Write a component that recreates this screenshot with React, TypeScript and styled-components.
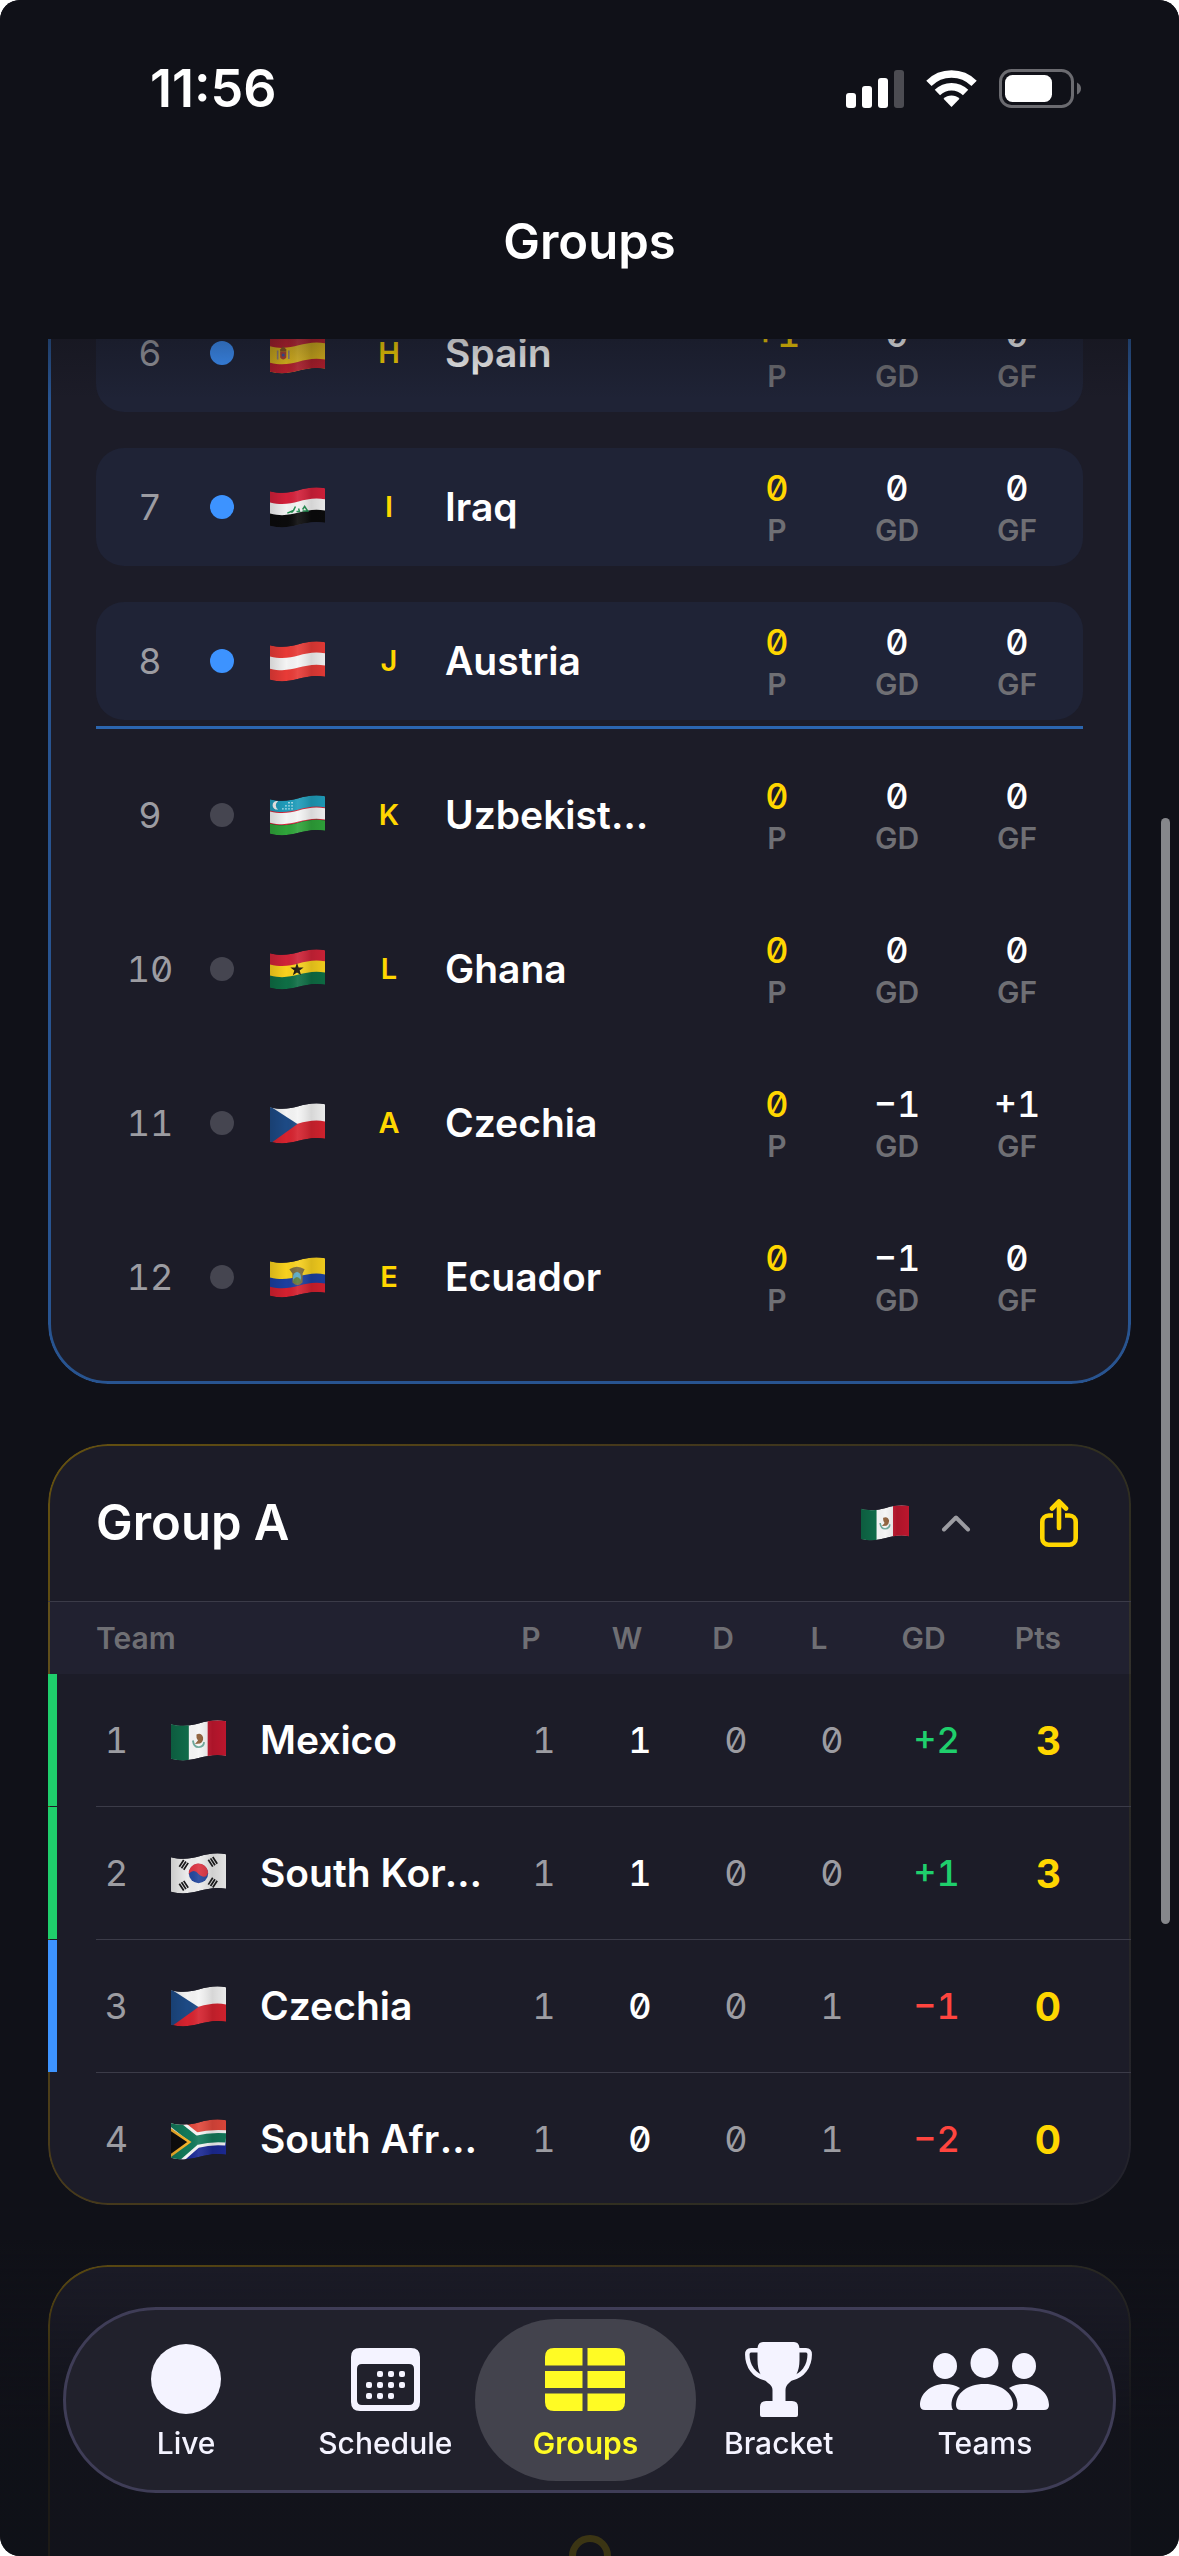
import { useId, useState } from "react";
import type { ReactNode } from "react";
import styled, { createGlobalStyle, ThemeProvider } from "styled-components";

const theme = {
  page: "#101118",
  card: "#1c1c28",
  cardRaised: "rgba(180, 180, 255, 0.04)",
  rowActive: "#1f2336",
  line: "#3b3b48",
  blue: "#3d93ff",
  blueLine: "#2b65ae",
  blueBorder: "#285490",
  green: "#1fcf6c",
  red: "#ff453f",
  gold: "#ffd600",
  textPrimary: "#ffffff",
  textSecondary: "#9c9ca2",
  textMuted: "#6f6f74",
  tabText: "#f4f3ff",
  tabActive: "#fffb24",
};

const GlobalStyle = createGlobalStyle`
  * {
    box-sizing: border-box;
  }

  body {
    margin: 0;
    background: #ffffff;
    font-family: Inter, "Liberation Sans", sans-serif;
  }
`;

const Screen = styled.div`
  height: 100vh;
  display: flex;
  flex-direction: column;
  overflow: hidden;
  border-radius: 20px;
  background: ${(props) => props.theme.page};
  color: ${(props) => props.theme.textPrimary};
`;

const Header = styled.header`
  position: relative;
  z-index: 10;
  flex: none;
  padding-bottom: 32px;
  background: ${(props) => props.theme.page};

  &::after {
    content: "";
    position: absolute;
    left: 0;
    right: 0;
    top: 100%;
    height: 60px;
    background: linear-gradient(rgba(16, 17, 24, 0.35), rgba(16, 17, 24, 0));
  }
`;

const StatusBar = styled.div`
  display: flex;
  align-items: center;
  justify-content: space-between;
  height: 177px;
  padding: 0 98px 0 150px;
`;

const Clock = styled.time`
  font-size: 52px;
  font-weight: 600;
  line-height: 60px;
`;

const StatusIcons = styled.div`
  display: flex;
  align-items: center;
  gap: 22px;

  svg {
    display: block;
  }
`;

const PageTitle = styled.h1`
  margin: 0;
  font-size: 49px;
  font-weight: 600;
  line-height: 130px;
  text-align: center;
`;

const Content = styled.main`
  flex: 1;
  min-height: 0;
  display: flex;
  flex-direction: column;
  gap: 60px;
  padding: 0 48px;
  margin-top: -93px;
`;

const Card = styled.section<{ $tone: "blue" | "gold" }>`
  position: relative;
  isolation: isolate;
  flex: none;
  overflow: hidden;
  border-radius: 60px;
  background: ${(props) => props.theme.card};

  &::before {
    content: "";
    position: absolute;
    inset: 0;
    z-index: -1;
    border-radius: inherit;
    padding: ${({ $tone }) => ($tone === "blue" ? 3 : 2)}px;
    background: ${({ $tone, theme }) =>
      $tone === "blue"
        ? theme.blueBorder
        : "linear-gradient(125deg, #65510f, #46391b 35%, #32301f 65%, #22222c)"};
    mask: linear-gradient(#000 0 0) content-box exclude, linear-gradient(#000 0 0);
  }
`;

const RankList = styled.ol`
  display: flex;
  flex-direction: column;
  margin: 0;
  padding: 48px;
  list-style: none;
`;

const RankRow = styled.li<{ $qualified: boolean; $afterCut: boolean }>`
  display: flex;
  align-items: center;
  gap: 36px;
  min-height: 118px;
  padding: 18px 18px 18px 30px;
  border-radius: 28px;
  background: ${({ $qualified, theme }) => ($qualified ? theme.rowActive : "transparent")};

  & + & {
    margin-top: ${({ $afterCut }) => ($afterCut ? 27 : 36)}px;
  }
`;

const CutLine = styled.li`
  height: 3px;
  margin: 6px 0 27px;
  background: ${(props) => props.theme.blueLine};
`;

const Rank = styled.span`
  flex: none;
  width: 48px;
  font-feature-settings: "tnum", "zero";
  font-size: 36px;
  line-height: 44px;
  text-align: center;
  color: ${(props) => props.theme.textSecondary};
`;

const Dot = styled.span<{ $qualified: boolean }>`
  flex: none;
  width: 24px;
  height: 24px;
  border-radius: 50%;
  background: ${({ $qualified, theme }) => ($qualified ? theme.blue : "#454550")};
`;

const GroupLetter = styled.span`
  flex: none;
  width: 48px;
  padding-left: 8px;
  font-size: 29px;
  font-weight: 600;
  line-height: 36px;
  text-align: center;
  color: ${(props) => props.theme.gold};
`;

const TeamName = styled.span`
  display: block;
  flex: 1;
  min-width: 0;
  overflow: hidden;
  text-overflow: ellipsis;
  white-space: nowrap;
  font-size: 39px;
  font-weight: 600;
  line-height: 48px;
`;

const Stats = styled.dl`
  flex: none;
  display: grid;
  grid-template-columns: repeat(3, 96px);
  column-gap: 24px;
  margin: 0 0 0 42px;
`;

const Stat = styled.div`
  display: flex;
  flex-direction: column-reverse;
  align-items: center;
  gap: 2px;
`;

const StatLabel = styled.dt`
  font-size: 30px;
  font-weight: 600;
  line-height: 36px;
  color: ${(props) => props.theme.textMuted};
`;

const StatValue = styled.dd<{ $gold?: boolean }>`
  margin: 0;
  font-feature-settings: "tnum", "zero";
  font-size: 36px;
  font-weight: 500;
  line-height: 44px;
  color: ${({ $gold, theme }) => ($gold ? theme.gold : theme.textPrimary)};
`;

const GroupHeader = styled.div`
  display: flex;
  align-items: center;
  height: 158px;
  padding: 0 48px;
  border-bottom: 1px solid ${(props) => props.theme.line};
`;

const GroupTitle = styled.h2`
  flex: 1;
  margin: 0;
  font-size: 49px;
  font-weight: 600;
  line-height: 60px;
`;

const IconButton = styled.button`
  display: flex;
  align-items: center;
  gap: 32px;
  padding: 0;
  border: 0;
  background: none;
  color: ${(props) => props.theme.textSecondary};
  cursor: pointer;

  & + & {
    margin-left: 64px;
    padding: 0 5px;
    color: ${(props) => props.theme.gold};
  }
`;

const Table = styled.table`
  width: 100%;
  table-layout: fixed;
  border-collapse: separate;
  border-spacing: 0;

  td,
  th {
    padding: 0;
  }
`;

const Col = styled.col<{ $width?: number }>`
  width: ${({ $width }) => ($width ? `${$width}px` : "auto")};
`;

const HeadCell = styled.th<{ $align?: "left" | "right" }>`
  height: 72px;
  background: ${(props) => props.theme.cardRaised};
  font-size: 30px;
  font-weight: 600;
  text-align: ${({ $align = "center" }) => $align};
  color: ${(props) => props.theme.textMuted};

  &&& {
    padding: ${({ $align }) =>
      $align === "left" ? "0 0 0 48px" : $align === "right" ? "0 70px 0 0" : "0 26px 0 0"};
  }
`;

const TeamRow = styled.tr`
  td {
    height: 133px;
    border-bottom: 1px solid ${(props) => props.theme.line};
  }

  td:first-child {
    border-bottom-color: transparent;
  }

  &:last-child td {
    height: 132px;
    border-bottom: 0;
  }
`;

const ZoneCell = styled.td<{ $zone?: "green" | "blue" }>`
  ${({ $zone, theme }) => $zone && `box-shadow: inset 9px 0 0 ${theme[$zone]};`}
`;

const NameCell = styled.td`
  &&& {
    padding-right: 12px;
  }
`;

const NumberCell = styled.td<{ $tone?: "primary" | "green" | "red" }>`
  font-feature-settings: "tnum", "zero";
  font-size: 36px;
  font-weight: ${({ $tone }) => ($tone ? 500 : 400)};
  text-align: center;
  color: ${({ $tone, theme }) =>
    $tone === "primary" ? theme.textPrimary : $tone ? theme[$tone] : theme.textSecondary};
`;

const FlagCell = styled.td`
  text-align: center;

  svg {
    vertical-align: middle;
  }
`;

const PointsCell = styled.td`
  font-size: 39px;
  font-weight: 700;
  text-align: right;
  color: ${(props) => props.theme.gold};

  &&& {
    padding-right: 70px;
  }
`;

const LoadingBody = styled.div`
  display: flex;
  justify-content: center;
  height: 420px;
  padding-top: 270px;
`;

const Spinner = styled.span`
  width: 42px;
  height: 42px;
  border: 7px solid ${(props) => props.theme.gold};
  border-radius: 50%;
`;

const ScrollThumb = styled.div`
  position: fixed;
  z-index: 12;
  top: 32%;
  right: 9px;
  width: 9px;
  height: 1106px;
  border-radius: 5px;
  background: #86878b;
`;

const BottomFade = styled.div`
  position: fixed;
  z-index: 14;
  left: 0;
  right: 0;
  bottom: 0;
  height: 316px;
  border-radius: 0 0 20px 20px;
  background: linear-gradient(rgba(16, 17, 24, 0), rgba(16, 17, 24, 0.82) 60%);
`;

const TabBar = styled.nav`
  position: fixed;
  z-index: 20;
  left: 63px;
  right: 63px;
  bottom: 63px;
  display: grid;
  grid-template-columns: 198fr 200fr 200fr 186fr 226fr;
  height: 186px;
  padding: 9px 15px 9px 21px;
  border: 3px solid #3f3d57;
  border-radius: 93px;
  background: #21212c;
`;

const Tab = styled.a<{ $active: boolean }>`
  display: flex;
  flex-direction: column;
  align-items: center;
  gap: 8px;
  margin: 0 -10px;
  padding-top: 22px;
  border-radius: 81px;
  background: ${({ $active }) => ($active ? "#43434d" : "transparent")};
  color: ${({ $active, theme }) => ($active ? theme.tabActive : theme.tabText)};
  font-size: 30px;
  font-weight: ${({ $active }) => ($active ? 600 : 500)};
  line-height: 36px;
  text-decoration: none;
`;

const TabIcon = styled.span`
  display: flex;
  align-items: center;
  height: 76px;
`;

type Country =
  | "spain"
  | "iraq"
  | "austria"
  | "uzbekistan"
  | "ghana"
  | "czechia"
  | "ecuador"
  | "mexico"
  | "southKorea"
  | "southAfrica";

// A horizontal stripe of the waving cloth, between heights a and b (0 to 34)
const stripe = (a: number, b: number) =>
  `M0 ${a + 4}C12 ${a + 7} 20 ${a + 5} 28 ${a + 3}C36 ${a + 1} 44 ${a - 1} 54 ${a + 1}` +
  `L54 ${b + 1}C44 ${b - 1} 36 ${b + 1} 28 ${b + 3}C20 ${b + 5} 12 ${b + 7} 0 ${b + 4}Z`;

const trigram = (x: number, y: number, angle: number) => (
  <g transform={`translate(${x} ${y}) rotate(${angle})`} stroke="#1b1b1d" strokeWidth="1.7">
    <path d="M-4 -2.6H4M-4 0H4M-4 2.6H4" />
  </g>
);

const flagArt: Record<Country, ReactNode> = {
  spain: (
    <>
      <path d={stripe(0, 34)} fill="#f3c81c" />
      <path d={stripe(0, 9)} fill="#c8202f" />
      <path d={stripe(25, 34)} fill="#c8202f" />
      <path d="M10 18h6v6q-3 4-6 0z" fill="#b5453a" />
      <path d="M10 16l3-3 3 3v2h-6z" fill="#8d5a22" />
      <path d="M7.500 17v9M18.500 17v8.500" stroke="#9a8a86" strokeWidth="1.600" />
      <circle cx="13" cy="21.500" r="1.500" fill="#3a5aa8" />
    </>
  ),
  iraq: (
    <>
      <path d={stripe(0, 12)} fill="#d3203a" />
      <path d={stripe(11, 23)} fill="#f1f1f1" />
      <path d={stripe(22, 34)} fill="#0b0b0c" />
      <path
        d="M17 25.500l6-2.500 2-4m-2 4l-2 2m5-1h3l-1-3m4 2.500h5l-3-4.500-2 3"
        fill="none"
        stroke="#1d8a4c"
        strokeWidth="1.500"
      />
    </>
  ),
  austria: (
    <>
      <path d={stripe(0, 34)} fill="#e83b37" />
      <path d={stripe(11, 23)} fill="#f4f4f4" />
    </>
  ),
  uzbekistan: (
    <>
      <path d={stripe(0, 12)} fill="#1f9cba" />
      <path d={stripe(11, 24)} fill="#d0283a" />
      <path d={stripe(12, 23)} fill="#f5f5f5" />
      <path d={stripe(24, 34)} fill="#2fa43a" />
      <path d="M8 6a4.200 4.200 0 1 0 0 8a4.600 4.600 0 0 1 0-8z" fill="#f5f5f5" />
      <path
        d="M12 13.500h12M15 10.500h9M18 7.500h6"
        stroke="#dff2f6"
        strokeWidth="1.300"
        strokeDasharray="1.300 1.700"
      />
    </>
  ),
  ghana: (
    <>
      <path d={stripe(0, 12)} fill="#cf2338" />
      <path d={stripe(11, 23)} fill="#f9d21d" />
      <path d={stripe(22, 34)} fill="#0e6e45" />
      <path
        d="M26.500 13.500l1.600 4.600h4.900l-3.900 2.900 1.500 4.700-4.100-2.800-4.100 2.800 1.500-4.700-3.900-2.900h4.900z"
        fill="#16130a"
      />
    </>
  ),
  czechia: (
    <>
      <path d={stripe(0, 18)} fill="#f4f4f4" />
      <path d={stripe(17, 34)} fill="#d6232f" />
      <path d="M0 3L27 20.500L0 40Z" fill="#1d4a85" />
    </>
  ),
  ecuador: (
    <>
      <path d={stripe(0, 17)} fill="#f8d11e" />
      <path d={stripe(16, 26)} fill="#1b3fa0" />
      <path d={stripe(25, 34)} fill="#d3202f" />
      <path d="M19 12q7.500-5 15 0l-2 4v9q-5 5-10 0v-9z" fill="#7a6a3c" />
      <ellipse cx="26.500" cy="20" rx="4" ry="5.500" fill="#58a8c4" />
      <path d="M23 22q3.500-5 7 0v3q-3.500 2-7 0z" fill="#5c7d3a" />
    </>
  ),
  mexico: (
    <>
      <path d={stripe(0, 34)} fill="#f5f5f5" />
      <path d="M0 0H17.500V42H0Z" fill="#0f6b49" />
      <path d="M36 0H54V42H36Z" fill="#c3172f" />
      <path d="M21.500 20q1 7 6 6.500q4.500-.5 5-5" fill="none" stroke="#6aa79a" strokeWidth="1.800" />
      <path d="M25 14q5-2 6.500 3q.5 4-3 6l-5 .5l3-3.500q-2-2-1.500-6z" fill="#8a5a33" />
    </>
  ),
  southKorea: (
    <>
      <path d={stripe(0, 34)} fill="#ececec" />
      <circle cx="27" cy="20" r="9.500" fill="#22469c" />
      <path
        d="M17.500 21A9.500 9.500 0 0 1 36.500 18.500Q35.500 24 31 23Q28.500 22 27 20.500Q24 16.500 20.500 18Q18 19 17.500 21Z"
        fill="#db3341"
      />
      {trigram(12.5, 11.5, -57)}
      {trigram(41, 8.5, 57)}
      {trigram(12.5, 32, 57)}
      {trigram(41, 29, -57)}
    </>
  ),
  southAfrica: (
    <>
      <path d={stripe(0, 17)} fill="#e2483c" />
      <path d={stripe(17, 34)} fill="#1c2a96" />
      <path
        d="M0 2L24 21Q40 17 54 18.500M0 42L24 21"
        fill="none"
        stroke="#f4f4f4"
        strokeWidth="15"
      />
      <path d="M0 2L24 21Q40 17 54 18.500M0 42L24 21" fill="none" stroke="#12795a" strokeWidth="9" />
      <path d="M-2 9L18 22.500L-2 37Z" fill="#0d0d0e" stroke="#f5b32b" strokeWidth="2.500" />
    </>
  ),
};

const FlagImage = styled.svg`
  flex: none;
`;

function Flag({ country, label, width = 55 }: { country: Country; label: string; width?: number }) {
  const id = useId();

  return (
    <FlagImage
      width={width}
      height={Math.round((width * 40) / 54)}
      viewBox="0 0 54 40"
      role="img"
      aria-label={label}
    >
      <clipPath id={`${id}-cloth`}>
        <path d={stripe(0, 34)} />
      </clipPath>
      <linearGradient id={`${id}-shade`}>
        <stop offset="0" stopColor="#000" stopOpacity="0.14" />
        <stop offset="0.3" stopColor="#000" stopOpacity="0" />
        <stop offset="0.5" stopColor="#fff" stopOpacity="0.08" />
        <stop offset="0.75" stopColor="#000" stopOpacity="0.12" />
        <stop offset="1" stopColor="#000" stopOpacity="0.04" />
      </linearGradient>
      <g clipPath={`url(#${id}-cloth)`}>
        {flagArt[country]}
        <rect width="54" height="42" fill={`url(#${id}-shade)`} />
      </g>
    </FlagImage>
  );
}

const SignalIcon = () => (
  <svg width="58" height="38" viewBox="0 0 58 38" fill="#fff" aria-hidden="true">
    <rect x="0" y="23" width="10" height="15" rx="3" />
    <rect x="16" y="16" width="10" height="22" rx="3" />
    <rect x="32" y="8" width="10" height="30" rx="3" />
    <rect x="48" y="0" width="10" height="38" rx="3" opacity="0.25" />
  </svg>
);

const WifiIcon = () => (
  <svg width="51" height="37" viewBox="0 0 51 37" fill="none" aria-hidden="true">
    <path d="M2.900 13.400A32 32 0 0 1 48.100 13.400" stroke="#fff" strokeWidth="7.500" />
    <path d="M11.400 22.500A20 20 0 0 1 39.600 22.500" stroke="#fff" strokeWidth="7.500" />
    <path d="M25.500 37L17.500 28.800A11.500 11.500 0 0 1 33.500 28.800Z" fill="#fff" />
  </svg>
);

const BatteryIcon = () => (
  <svg width="82" height="39" viewBox="0 0 82 39" fill="none" aria-hidden="true">
    <rect x="1.500" y="1.500" width="72" height="36" rx="11" stroke="#6b6b70" strokeWidth="3" />
    <rect x="6" y="6" width="47" height="27" rx="7.500" fill="#fff" />
    <path d="M78 13.500q4 2 4 6t-4 6z" fill="#6b6b70" />
  </svg>
);

const ChevronIcon = () => (
  <svg width="30" height="18" viewBox="0 0 30 18" fill="none" aria-hidden="true">
    <path
      d="M3 15.500L15 3.500L27 15.500"
      stroke="currentColor"
      strokeWidth="4"
      strokeLinecap="round"
      strokeLinejoin="round"
    />
  </svg>
);

const ShareIcon = () => (
  <svg width="38" height="48" viewBox="0 0 38 48" fill="none" aria-hidden="true">
    <g stroke="currentColor" strokeWidth="4.600" strokeLinecap="round" strokeLinejoin="round">
      <path
        d="M13 16.500H8.700a6.400 6.400 0 0 0-6.400 6.400V39.300a6.400 6.400 0 0 0 6.400 6.400h20.600a6.400 6.400 0 0 0 6.400-6.400V22.900a6.400 6.400 0 0 0-6.400-6.400H25"
        strokeLinecap="butt"
      />
      <path d="M19 3V29" />
      <path d="M12 9.500L19 2.500L26 9.500" />
    </g>
  </svg>
);

const LiveIcon = () => (
  <svg width="70" height="70" viewBox="0 0 70 70" fill="currentColor" aria-hidden="true">
    <circle cx="35" cy="35" r="35" />
  </svg>
);

const calendarDots = [
  [29, 26],
  [40, 26],
  [51, 26],
  [18, 37],
  [29, 37],
  [40, 37],
  [51, 37],
  [18, 48],
  [29, 48],
  [40, 48],
];

const CalendarIcon = () => (
  <svg width="69" height="63" viewBox="0 0 69 63" fill="currentColor" aria-hidden="true">
    <path
      fillRule="evenodd"
      d="M9 0H60Q69 0 69 9V54Q69 63 60 63H9Q0 63 0 54V9Q0 0 9 0ZM11 16Q6 16 6 21V52Q6 57 11 57H58Q63 57 63 52V21Q63 16 58 16Z"
    />
    {calendarDots.map(([x, y]) => (
      <rect key={`${x}-${y}`} x={x - 3} y={y - 3} width="6" height="6" rx="2" />
    ))}
  </svg>
);

const GridIcon = () => (
  <svg width="80" height="63" viewBox="0 0 80 63" fill="currentColor" aria-hidden="true">
    <path d="M9 0H37.500V17.500H0V9Q0 0 9 0Z" />
    <path d="M42.500 0H71Q80 0 80 9V17.500H42.500Z" />
    <path d="M0 23H37.500V40H0ZM42.500 23H80V40H42.500Z" />
    <path d="M0 45.500H37.500V63H9Q0 63 0 54Z" />
    <path d="M42.500 45.500H80V54Q80 63 71 63H42.500Z" />
  </svg>
);

const TrophyIcon = () => (
  <svg width="67" height="75" viewBox="0 0 67 75" fill="currentColor" aria-hidden="true">
    <path d="M18 0H49Q54 0 54.500 6V18C54.500 30 50 36 44 41Q40.500 44 40.500 48V59H47Q53 59 53 65V73Q53 75 51 75H17Q15 75 15 73V65Q15 59 21 59H27.500V48Q27.500 44 23 41C17 36 12.500 30 12.500 18V6Q13 0 18 0Z" />
    <path
      d="M14 8.200H6Q2.300 8.200 2.300 12.500C2.300 24 9 34 21 36.500M53 8.200H61Q64.700 8.200 64.700 12.500C64.700 24 58 34 46 36.500"
      fill="none"
      stroke="currentColor"
      strokeWidth="4.500"
    />
  </svg>
);

const TeamsIcon = () => (
  <svg width="129" height="62" viewBox="0 0 129 62" fill="currentColor" aria-hidden="true">
    <ellipse cx="64.500" cy="15" rx="14" ry="15" />
    <ellipse cx="25" cy="18" rx="12" ry="13" />
    <ellipse cx="104" cy="18" rx="12" ry="13" />
    <path d="M36 57C36 46 46 36 64.500 36S93 46 93 57Q93 62 88 62H41Q36 62 36 57Z" />
    <path d="M0 57C0 46 10 36 25 36Q33.500 36 40 40C34 45 31.500 51 31.500 57Q31.500 60 33 62H5Q0 62 0 57Z" />
    <path d="M129 57C129 46 119 36 104 36Q95.500 36 89 40C95 45 97.500 51 97.500 57Q97.500 60 96 62H124Q129 62 129 57Z" />
  </svg>
);

interface RankedTeam {
  rank: number;
  country: Country;
  group: string;
  name: string;
  p: string;
  gd: string;
  gf: string;
}

const CUT = 8;

const rankedTeams: RankedTeam[] = [
  { rank: 6, country: "spain", group: "H", name: "Spain", p: "+1", gd: "0", gf: "0" },
  { rank: 7, country: "iraq", group: "I", name: "Iraq", p: "0", gd: "0", gf: "0" },
  { rank: 8, country: "austria", group: "J", name: "Austria", p: "0", gd: "0", gf: "0" },
  { rank: 9, country: "uzbekistan", group: "K", name: "Uzbekistan", p: "0", gd: "0", gf: "0" },
  { rank: 10, country: "ghana", group: "L", name: "Ghana", p: "0", gd: "0", gf: "0" },
  { rank: 11, country: "czechia", group: "A", name: "Czechia", p: "0", gd: "−1", gf: "+1" },
  { rank: 12, country: "ecuador", group: "E", name: "Ecuador", p: "0", gd: "−1", gf: "0" },
];

interface Standing {
  country: Country;
  name: string;
  zone?: "green" | "blue";
  played: number;
  won: number;
  drawn: number;
  lost: number;
  gd: string;
  points: number;
}

const groupA: Standing[] = [
  { country: "mexico", name: "Mexico", zone: "green", played: 1, won: 1, drawn: 0, lost: 0, gd: "+2", points: 3 },
  { country: "southKorea", name: "South Korea", zone: "green", played: 1, won: 1, drawn: 0, lost: 0, gd: "+1", points: 3 },
  { country: "czechia", name: "Czechia", zone: "blue", played: 1, won: 0, drawn: 0, lost: 1, gd: "−1", points: 0 },
  { country: "southAfrica", name: "South Africa", played: 1, won: 0, drawn: 0, lost: 1, gd: "−2", points: 0 },
];

const tabs = [
  { id: "live", label: "Live", icon: <LiveIcon /> },
  { id: "schedule", label: "Schedule", icon: <CalendarIcon /> },
  { id: "groups", label: "Groups", icon: <GridIcon /> },
  { id: "bracket", label: "Bracket", icon: <TrophyIcon /> },
  { id: "teams", label: "Teams", icon: <TeamsIcon /> },
];

function RankedTeamRow({ team }: { team: RankedTeam }) {
  const qualified = team.rank <= CUT;

  return (
    <RankRow $qualified={qualified} $afterCut={team.rank === CUT + 1}>
      <Rank>{team.rank}</Rank>
      <Dot $qualified={qualified} />
      <Flag country={team.country} label={`${team.name} flag`} />
      <GroupLetter>{team.group}</GroupLetter>
      <TeamName>{team.name}</TeamName>
      <Stats>
        <Stat>
          <StatLabel>P</StatLabel>
          <StatValue $gold>{team.p}</StatValue>
        </Stat>
        <Stat>
          <StatLabel>GD</StatLabel>
          <StatValue>{team.gd}</StatValue>
        </Stat>
        <Stat>
          <StatLabel>GF</StatLabel>
          <StatValue>{team.gf}</StatValue>
        </Stat>
      </Stats>
    </RankRow>
  );
}

function GroupTable({ standings }: { standings: Standing[] }) {
  return (
    <Table>
      <colgroup>
        <Col $width={48} />
        <Col $width={41} />
        <Col $width={123} />
        <Col />
        <Col $width={96} />
        <Col $width={96} />
        <Col $width={96} />
        <Col $width={96} />
        <Col $width={113} />
        <Col $width={138} />
      </colgroup>
      <thead>
        <tr>
          <HeadCell colSpan={4} $align="left">
            Team
          </HeadCell>
          <HeadCell>P</HeadCell>
          <HeadCell>W</HeadCell>
          <HeadCell>D</HeadCell>
          <HeadCell>L</HeadCell>
          <HeadCell>GD</HeadCell>
          <HeadCell $align="right">Pts</HeadCell>
        </tr>
      </thead>
      <tbody>
        {standings.map((team, index) => (
          <TeamRow key={team.name}>
            <ZoneCell $zone={team.zone} />
            <NumberCell>{index + 1}</NumberCell>
            <FlagCell>
              <Flag country={team.country} label={`${team.name} flag`} />
            </FlagCell>
            <NameCell>
              <TeamName>{team.name}</TeamName>
            </NameCell>
            <NumberCell>{team.played}</NumberCell>
            <NumberCell $tone="primary">{team.won}</NumberCell>
            <NumberCell>{team.drawn}</NumberCell>
            <NumberCell>{team.lost}</NumberCell>
            <NumberCell $tone={team.gd.startsWith("+") ? "green" : "red"}>{team.gd}</NumberCell>
            <PointsCell>{team.points}</PointsCell>
          </TeamRow>
        ))}
      </tbody>
    </Table>
  );
}

export default function App() {
  const [activeTab, setActiveTab] = useState("groups");
  const [isOpen, setIsOpen] = useState(true);

  return (
    <ThemeProvider theme={theme}>
      <GlobalStyle />
      <Screen>
        <Header>
          <StatusBar>
            <Clock>11:56</Clock>
            <StatusIcons>
              <SignalIcon />
              <WifiIcon />
              <BatteryIcon />
            </StatusIcons>
          </StatusBar>
          <PageTitle>Groups</PageTitle>
        </Header>

        <Content>
          <Card $tone="blue">
            <RankList>
              {rankedTeams.slice(0, 3).map((team) => (
                <RankedTeamRow key={team.rank} team={team} />
              ))}
              <CutLine role="separator" />
              {rankedTeams.slice(3).map((team) => (
                <RankedTeamRow key={team.rank} team={team} />
              ))}
            </RankList>
          </Card>

          <Card $tone="gold">
            <GroupHeader>
              <GroupTitle>Group A</GroupTitle>
              <IconButton
                type="button"
                aria-label="Toggle group"
                aria-expanded={isOpen}
                onClick={() => setIsOpen(!isOpen)}
              >
                <Flag country="mexico" label="Mexico flag" width={48} />
                <ChevronIcon />
              </IconButton>
              <IconButton type="button" aria-label="Share group">
                <ShareIcon />
              </IconButton>
            </GroupHeader>
            {isOpen && <GroupTable standings={groupA} />}
          </Card>

          <Card $tone="gold">
            <LoadingBody>
              <Spinner />
            </LoadingBody>
          </Card>
        </Content>

        <ScrollThumb />
        <BottomFade />
        <TabBar>
          {tabs.map((tab) => (
            <Tab
              key={tab.id}
              href={`#${tab.id}`}
              $active={tab.id === activeTab}
              onClick={() => setActiveTab(tab.id)}
            >
              <TabIcon>{tab.icon}</TabIcon>
              {tab.label}
            </Tab>
          ))}
        </TabBar>
      </Screen>
    </ThemeProvider>
  );
}
